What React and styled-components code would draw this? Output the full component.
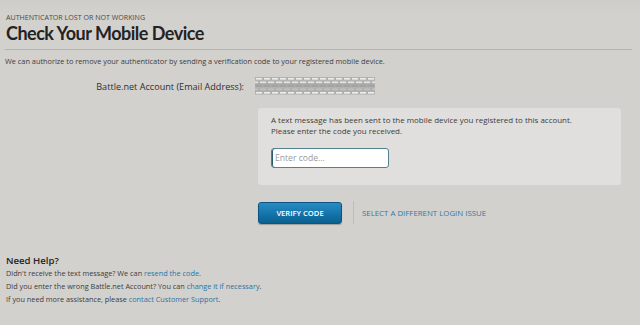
import React from "react";
import styled, { createGlobalStyle } from "styled-components";

const Global = createGlobalStyle`
  html, body { margin: 0; padding: 0; }
  body {
    width: 640px; height: 325px; overflow: hidden;
    background: #d3d1cd;
    font-family: "Open Sans", "DejaVu Sans", sans-serif;
  }
`;

const Page = styled.div`
  width: 640px;
  height: 325px;
  box-sizing: border-box;
  padding: 12px 8px 0 6px;
  background: linear-gradient(180deg, #cfcdca 0px, #d3d1cd 14px, #d3d1cd 100%);
`;

const Kicker = styled.div`
  font-size: 7.1px;
  color: #4a4a4a;
  text-transform: uppercase;
  line-height: 10px;
`;

const Title = styled.h1`
  margin: 0;
  font-family: Lato, "Open Sans", sans-serif;
  font-size: 18px;
  font-weight: 700;
  color: #232323;
  line-height: 22px;
  letter-spacing: -0.5px;
`;

const Rule = styled.hr`
  margin: 5px 0 0 -1px;
  border: 0;
  height: 1px;
  background: #b4b2ae;
`;

const Intro = styled.p`
  margin: 5px 0 0 -1px;
  font-size: 7.35px;
  color: #3c3c3c;
  line-height: 12px;
`;

const FieldRow = styled.div`
  display: grid;
  grid-template-columns: 238px auto;
  column-gap: 11px;
  align-items: center;
  margin-top: 10px;
`;

const Label = styled.div`
  text-align: right;
  font-size: 9.1px;
  color: #2f2f2f;
`;

const Redacted = styled.svg`
  display: block;
  width: 120px;
  height: 18px;
`;

const Panel = styled.div`
  margin: 13px 0 0 252px;
  width: 363px;
  height: 77px;
  box-sizing: border-box;
  padding: 7px 13px;
  background: #e0dfdd;
  border-radius: 3px;
`;

const PanelText = styled.p`
  margin: 0;
  font-size: 7.95px;
  color: #3c3c3c;
  line-height: 11px;
`;

const CodeInput = styled.input`
  display: block;
  margin-top: 11px;
  width: 118px;
  height: 20px;
  box-sizing: border-box;
  border: 1.5px solid #55808e;
  border-radius: 3px;
  background: #fff;
  padding: 0 0 0 3px;
  font-family: inherit;
  font-size: 8.6px;
  color: #333;
  outline: none;
  box-shadow: inset 1px 0 0 #2c5c70;
  &::placeholder { color: #9a9a9a; }
`;

const Actions = styled.div`
  display: flex;
  align-items: center;
  margin: 16px 0 0 252px;
  height: 23px;
`;

const VerifyButton = styled.button`
  width: 84px;
  height: 22px;
  border: 1px solid #0c5582;
  border-radius: 3px;
  background: linear-gradient(180deg, #2a8ac2 0%, #1676ae 50%, #09608f 100%);
  color: #fff;
  font-family: inherit;
  font-weight: 600;
  font-size: 7.6px;
  text-transform: uppercase;
  box-shadow: 0 1px 1px rgba(0,0,0,0.25);
  padding: 0;
`;

const Divider = styled.div`
  width: 1px;
  align-self: stretch;
  background: #c0beba;
  margin: 0 8px 0 11px;
`;

const IssueLink = styled.a`
  font-size: 7.85px;
  color: #3778a6;
  text-transform: uppercase;
  text-decoration: none;
`;

const Help = styled.section`
  margin-top: 30px;
`;

const HelpTitle = styled.h2`
  margin: 0;
  font-size: 9.6px;
  font-weight: 600;
  color: #232323;
  line-height: 13px;
`;

const HelpLine = styled.p`
  margin: 0;
  font-size: 7.3px;
  color: #3c3c3c;
  line-height: 13px;
`;

const Link = styled.a`
  color: #2a73a6;
  text-decoration: none;
`;

function Bricks() {
  const rows = [
    { y: 0.5, off: 0, fill: "#ebebea" },
    { y: 4, off: 4, fill: "#e4e4e3" },
    { y: 7.5, off: 0, fill: "#a2a2a0" },
    { y: 11, off: 4, fill: "#c4c4c3" },
    { y: 14.5, off: 0, fill: "#ececeb" },
  ];
  const bricks = [];
  rows.forEach((r, ri) => {
    for (let x = -r.off; x < 120; x += 8) {
      bricks.push(
        <rect key={ri + "-" + x} x={x + 0.5} y={r.y} width={7} height={2.6}
          fill={r.fill} stroke="#a9a9a7" strokeWidth="0.8" />
      );
    }
  });
  return (
    <Redacted viewBox="0 0 120 18">
      <rect x="0" y="0" width="120" height="18" fill="#cfcfcd" />
      {bricks}
    </Redacted>
  );
}

export default function App() {
  return (
    <>
      <Global />
      <Page>
        <Kicker>Authenticator lost or not working</Kicker>
        <Title>Check Your Mobile Device</Title>
        <Rule />
        <Intro>We can authorize to remove your authenticator by sending a verification code to your registered mobile device.</Intro>
        <FieldRow>
          <Label>Battle.net Account (Email Address):</Label>
          <Bricks />
        </FieldRow>
        <Panel>
          <PanelText>A text message has been sent to the mobile device you registered to this account.</PanelText>
          <PanelText>Please enter the code you received.</PanelText>
          <CodeInput placeholder="Enter code..." />
        </Panel>
        <Actions>
          <VerifyButton>Verify Code</VerifyButton>
          <Divider />
          <IssueLink href="#">Select a different login issue</IssueLink>
        </Actions>
        <Help>
          <HelpTitle>Need Help?</HelpTitle>
          <HelpLine>Didn't receive the text message? We can <Link href="#">resend the code</Link>.</HelpLine>
          <HelpLine>Did you enter the wrong Battle.net Account? You can <Link href="#">change it if necessary</Link>.</HelpLine>
          <HelpLine>If you need more assistance, please <Link href="#">contact Customer Support</Link>.</HelpLine>
        </Help>
      </Page>
    </>
  );
}
